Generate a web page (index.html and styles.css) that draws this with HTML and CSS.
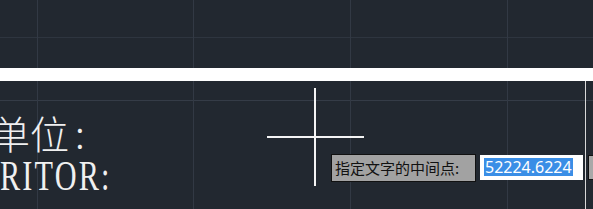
FILE: index.html
```html
<!DOCTYPE html>
<html lang="zh-CN">
<head>
    <meta charset="UTF-8">
    <title>CAD 文字</title>
    <link rel="stylesheet" href="styles.css">
</head>
<body>
    <div class="canvas">
        <div class="topArea"></div>
        <div class="frameLine"></div>
        <div class="drawArea">
            <div class="textBlock">
                <div class="line cn">单位<span class="colon">:</span></div>
                <div class="line en"><span>RITOR:</span></div>
            </div>
        </div>

        <!-- 十字光标 -->
        <div class="cursorV"></div>
        <div class="cursorH"></div>
        <div class="edgeLine"></div>

        <!-- 动态输入 -->
        <div class="dynInput">
            <div class="prompt">指定文字的中间点:</div>
            <div class="valueBox"><span class="selected">52224.6224</span></div>
            <div class="nextBox"></div>
        </div>
    </div>
</body>
</html>
```

FILE: styles.css
```css
*{
    margin: 0;
    padding: 0;
    box-sizing: border-box;
}
body{
    background: #222830;
}
.canvas{
    position: relative;
    width: 593px;
    height: 209px;
    overflow: hidden;
    background-color: #222830;
    background-image:
        linear-gradient(to right, transparent 37px, #323944 37px, #323944 38px, transparent 38px),
        linear-gradient(to right, transparent 193px, #323944 193px, #323944 194px, transparent 194px),
        linear-gradient(to right, transparent 350px, #323944 350px, #323944 351px, transparent 351px),
        linear-gradient(to right, transparent 507px, #323944 507px, #323944 508px, transparent 508px),
        linear-gradient(to bottom, transparent 37px, #2e353f 37px, #2e353f 38px, transparent 38px),
        linear-gradient(to bottom, transparent 100px, #353c47 100px, #353c47 101px, transparent 101px);
}
.topArea{
    height: 68px;
}
.frameLine{
    height: 13px;
    background: #fff;
}
.drawArea{
    height: 128px;
}
.textBlock{
    padding-top: 29px;
    color: #f0f0f0;
}
.line{
    height: 45px;
    line-height: 45px;
    white-space: nowrap;
}
.cn{
    margin-left: -9px;
    font-family: "Noto Sans CJK SC", sans-serif;
    font-size: 39px;
    font-weight: 300;
}
.colon{
    margin-left: 6px;
}
.en{
    margin-top: -1px;
    font-family: "Liberation Serif", serif;
    font-size: 42px;
}
.en span{
    display: inline-block;
    letter-spacing: 3px;
    transform: scaleX(0.72);
    transform-origin: left center;
}
.cursorV{
    position: absolute;
    left: 314px;
    top: 88px;
    width: 2px;
    height: 98px;
    background: #f4f4f4;
}
.cursorH{
    position: absolute;
    left: 267px;
    top: 136px;
    width: 97px;
    height: 2px;
    background: #f4f4f4;
}
.edgeLine{
    position: absolute;
    left: 585px;
    top: 81px;
    width: 1px;
    height: 128px;
    background: #d8d8d8;
}
.dynInput{
    position: absolute;
    left: 331px;
    top: 154px;
    display: flex;
    align-items: flex-start;
    gap: 4px;
}
.prompt{
    width: 145px;
    height: 28px;
    padding-left: 3px;
    background: #a2a2a2;
    border: 1px solid #111;
    color: #111;
    font-family: "Noto Sans CJK SC", sans-serif;
    font-size: 15px;
    line-height: 25px;
}
.valueBox{
    width: 103px;
    height: 25px;
    margin-top: 1px;
    padding: 3px 0 0 4px;
    background: #fff;
}
.selected{
    display: inline-block;
    height: 18px;
    padding: 0 1px;
    background: #3a8ee6;
    color: #fff;
    font-family: "Noto Sans", sans-serif;
    font-size: 16px;
    line-height: 18px;
}
.nextBox{
    width: 20px;
    height: 25px;
    margin-top: 1px;
    margin-left: 1px;
    background: #a8a8a8;
    border: 1px solid #111;
}
```
